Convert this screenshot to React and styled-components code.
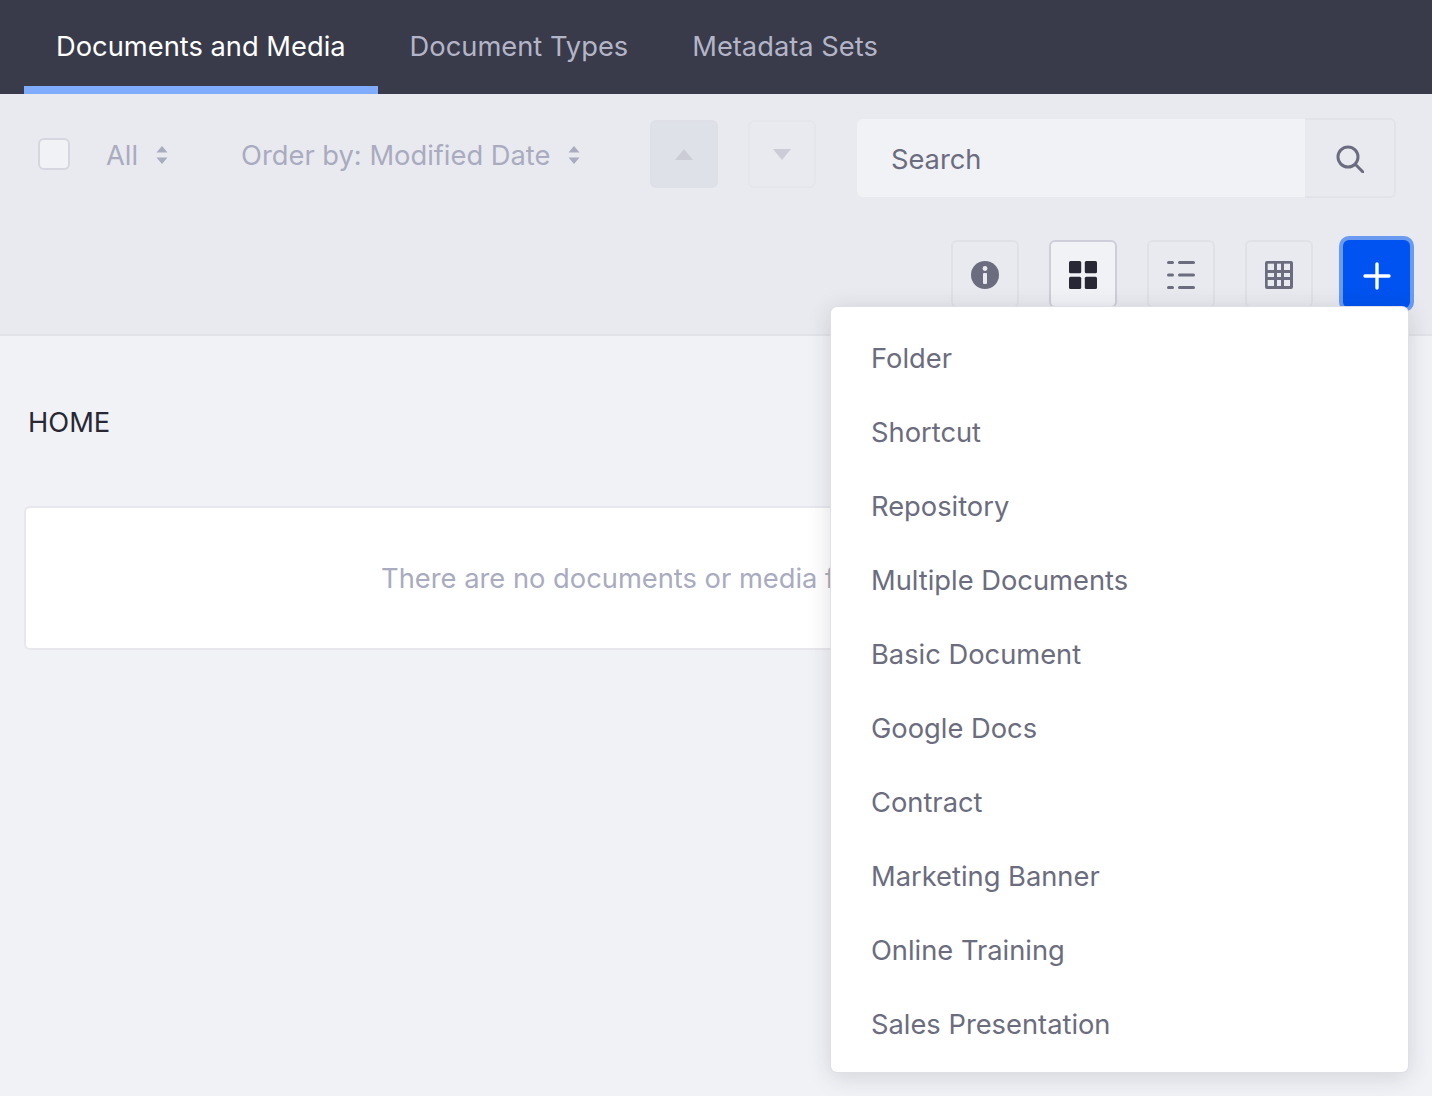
import { createGlobalStyle } from 'styled-components'
import styled from 'styled-components'

const GlobalStyle = createGlobalStyle`
    html, body {
        margin: 0;
        padding: 0;
    }
    body {
        background-color: #f1f2f6;
        font-family: Inter, "Liberation Sans", sans-serif;
    }
`

const Page = styled.div`
    width: 1432px;
    height: 1096px;
    overflow: hidden;
    background-color: #f1f2f6;
`

//-------------------------------------------Tabs---------------------------------------
const TabBar = styled.nav`
    display: flex;
    height: 94px;
    padding-left: 24px;
    background-color: #393a4a;
`

const Tab = styled.a`
    display: flex;
    align-items: center;
    box-sizing: border-box;
    height: 94px;
    padding: 6px 32px 0;
    border-bottom: 8px solid ${props => (props.$active ? '#80acff' : 'transparent')};
    color: ${props => (props.$active ? '#ffffff' : '#b3b5c7')};
    font-size: 27.3px;
`

//-------------------------------------------Toolbar---------------------------------------
const Toolbar = styled.div`
    display: flex;
    flex-direction: column;
    gap: 42px;
    height: 240px;
    box-sizing: content-box;
    border-bottom: 2px solid #e2e3e9;
    background-color: #e9eaef;
`

const FilterRow = styled.div`
    display: flex;
    align-items: center;
    height: 80px;
    margin-top: 24px;
    padding: 0 36px 0 38px;
`

const CheckBox = styled.span`
    display: block;
    flex-shrink: 0;
    box-sizing: border-box;
    width: 32px;
    height: 32px;
    margin-top: -8px;
    border: 2px solid #d5d6df;
    border-radius: 6px;
    background-color: #f1f2f6;
`

const Select = styled.div`
    display: flex;
    flex-shrink: 0;
    align-items: center;
    gap: ${props => props.$gap}px;
    margin-left: ${props => props.$left}px;
    margin-top: -6px;
    color: #a9abbf;
    font-size: 27.3px;
    white-space: nowrap;
`

const SortButton = styled.button`
    display: flex;
    flex-shrink: 0;
    align-items: center;
    justify-content: center;
    box-sizing: border-box;
    width: 68px;
    height: 68px;
    margin: -8px 0 0 ${props => props.$left}px;
    padding: 0;
    border: 2px solid ${props => (props.$active ? '#dfe0e7' : '#e5e6eb')};
    border-radius: 6px;
    background-color: ${props => (props.$active ? '#dfe1e9' : 'transparent')};
`

const SearchBox = styled.div`
    display: flex;
    flex-shrink: 0;
    margin-left: 41px;
`

const SearchInput = styled.div`
    display: flex;
    align-items: center;
    box-sizing: border-box;
    width: 448px;
    height: 78px;
    margin-top: 1px;
    padding: 2px 0 0 33.5px;
    border-radius: 6px 0 0 6px;
    background-color: #f1f2f6;
    color: #6b6c7e;
    font-size: 27.3px;
`

const SearchButton = styled.div`
    display: flex;
    align-items: center;
    justify-content: center;
    box-sizing: border-box;
    width: 91px;
    height: 80px;
    padding-top: 2px;
    border: 2px solid #e2e3e9;
    border-left: 0;
    border-radius: 0 6px 6px 0;
`

const ViewRow = styled.div`
    display: flex;
    justify-content: flex-end;
    gap: 30px;
    padding-right: 22px;
`

const ViewButton = styled.button`
    display: flex;
    align-items: center;
    justify-content: center;
    box-sizing: border-box;
    width: 68px;
    height: 68px;
    padding: 2px 0 0;
    border: 2px solid ${props => (props.$active ? '#cdced9' : '#e0e1e7')};
    border-radius: 6px;
    background-color: ${props => (props.$active ? '#f1f2f6' : '#e9eaef')};
`

const AddWrap = styled.div`
    position: relative;
`

const AddButton = styled.button`
    display: flex;
    align-items: center;
    justify-content: center;
    box-sizing: border-box;
    width: 67px;
    height: 68px;
    padding: 4px 0 0;
    border: 0;
    border-radius: 6px;
    background-color: #0053f0;
    box-shadow: 0 0 0 4px #6b9bf0;
`

//-------------------------------------------Dropdown---------------------------------------
const Menu = styled.ul`
    position: absolute;
    top: 67px;
    right: 2px;
    z-index: 5;
    box-sizing: border-box;
    width: 577px;
    height: 765px;
    margin: 0;
    padding: 14px 0;
    border-radius: 6px;
    background-color: #ffffff;
    box-shadow: 0 0 0 1px #dfe0e7, 0 4px 24px rgba(39, 40, 51, 0.16);
    list-style: none;
`

const MenuItem = styled.li`
    display: flex;
    align-items: center;
    height: 74px;
    padding-left: 40px;
    color: #6b6c7e;
    font-size: 27.3px;
`

//-------------------------------------------Content---------------------------------------
const Content = styled.main`
    padding: 69px 23px 0 24px;
`

const Breadcrumb = styled.h2`
    margin: 0 0 0 4px;
    color: #272833;
    font-size: 27.3px;
    font-weight: 400;
    line-height: 36px;
`

const EmptyCard = styled.div`
    display: flex;
    align-items: center;
    justify-content: center;
    box-sizing: border-box;
    height: 144px;
    margin-top: 65px;
    border: 2px solid #e7e7ed;
    border-radius: 6px;
    background-color: #ffffff;
    color: #a9abbf;
    font-size: 27.3px;
`

function UpDown() {
    return (
        <svg width="12" height="20" viewBox="0 0 12 20">
            <path d="M6 1 11.5 7.5H.5zM6 19 .5 12.5h11z" fill="#a9abbf" />
        </svg>
    )
}

function Caret({ down }) {
    return (
        <svg width="18" height="11" viewBox="0 0 18 11">
            <path d={down ? 'M0 0h18L9 11z' : 'M9 0l9 11H0z'} fill="#cbccd6" />
        </svg>
    )
}

function SearchIcon() {
    return (
        <svg width="28" height="28" viewBox="0 0 28 28" fill="none" stroke="#6b6c7e" strokeWidth="3" strokeLinecap="round">
            <circle cx="12" cy="12" r="10" />
            <path d="M19.5 19.5 27 27" />
        </svg>
    )
}

function InfoIcon() {
    return (
        <svg width="28" height="28" viewBox="0 0 28 28">
            <circle cx="14" cy="14" r="14" fill="#6b6c7e" />
            <rect x="12" y="12" width="4" height="11" rx="1" fill="#e9eaef" />
            <circle cx="14" cy="7.5" r="2.4" fill="#e9eaef" />
        </svg>
    )
}

function CardsIcon() {
    return (
        <svg width="28" height="28" viewBox="0 0 28 28" fill="#272833">
            <rect width="12.2" height="12.2" rx="1.5" />
            <rect x="15.8" width="12.2" height="12.2" rx="1.5" />
            <rect y="15.8" width="12.2" height="12.2" rx="1.5" />
            <rect x="15.8" y="15.8" width="12.2" height="12.2" rx="1.5" />
        </svg>
    )
}

function ListIcon() {
    return (
        <svg width="28" height="28" viewBox="0 0 28 28" fill="#6b6c7e">
            <rect y="0" width="7" height="3" rx="1.5" />
            <rect x="11" y="0" width="17" height="3" rx="1.5" />
            <rect y="12.5" width="7" height="3" rx="1.5" />
            <rect x="11" y="12.5" width="17" height="3" rx="1.5" />
            <rect y="25" width="7" height="3" rx="1.5" />
            <rect x="11" y="25" width="17" height="3" rx="1.5" />
        </svg>
    )
}

function TableIcon() {
    const columns = [[2.7, 6.3], [12, 4], [19, 6]]
    const rows = [[2.7, 6.3], [12, 4], [19, 6]]
    const cells = []
    for (const [y, height] of rows) {
        for (const [x, width] of columns) {
            cells.push(<rect key={`${x}-${y}`} x={x} y={y} width={width} height={height} fill="#e9eaef" />)
        }
    }
    return (
        <svg width="28" height="28" viewBox="0 0 28 28">
            <rect width="28" height="28" rx="2" fill="#6b6c7e" />
            {cells}
        </svg>
    )
}

function PlusIcon() {
    return (
        <svg width="28" height="28" viewBox="0 0 28 28" stroke="#ffffff" strokeWidth="3.4" strokeLinecap="round">
            <path d="M14 2v24M2 14h24" />
        </svg>
    )
}

const menuItems = [
    'Folder',
    'Shortcut',
    'Repository',
    'Multiple Documents',
    'Basic Document',
    'Google Docs',
    'Contract',
    'Marketing Banner',
    'Online Training',
    'Sales Presentation',
]

export default function App() {
    return (
        <Page>
            <GlobalStyle />
            <TabBar>
                <Tab $active>Documents and Media</Tab>
                <Tab>Document Types</Tab>
                <Tab>Metadata Sets</Tab>
            </TabBar>
            <Toolbar>
                <FilterRow>
                    <CheckBox />
                    <Select $left={36} $gap={18}>All <UpDown /></Select>
                    <Select $left={73} $gap={18}>Order by: Modified Date <UpDown /></Select>
                    <SortButton $left={70} $active><Caret /></SortButton>
                    <SortButton $left={30}><Caret down /></SortButton>
                    <SearchBox>
                        <SearchInput>Search</SearchInput>
                        <SearchButton><SearchIcon /></SearchButton>
                    </SearchBox>
                </FilterRow>
                <ViewRow>
                    <ViewButton><InfoIcon /></ViewButton>
                    <ViewButton $active><CardsIcon /></ViewButton>
                    <ViewButton><ListIcon /></ViewButton>
                    <ViewButton><TableIcon /></ViewButton>
                    <AddWrap>
                        <AddButton><PlusIcon /></AddButton>
                        <Menu>
                            {menuItems.map(item => <MenuItem key={item}>{item}</MenuItem>)}
                        </Menu>
                    </AddWrap>
                </ViewRow>
            </Toolbar>
            <Content>
                <Breadcrumb>HOME</Breadcrumb>
                <EmptyCard>There are no documents or media files in this folder.</EmptyCard>
            </Content>
        </Page>
    )
}
